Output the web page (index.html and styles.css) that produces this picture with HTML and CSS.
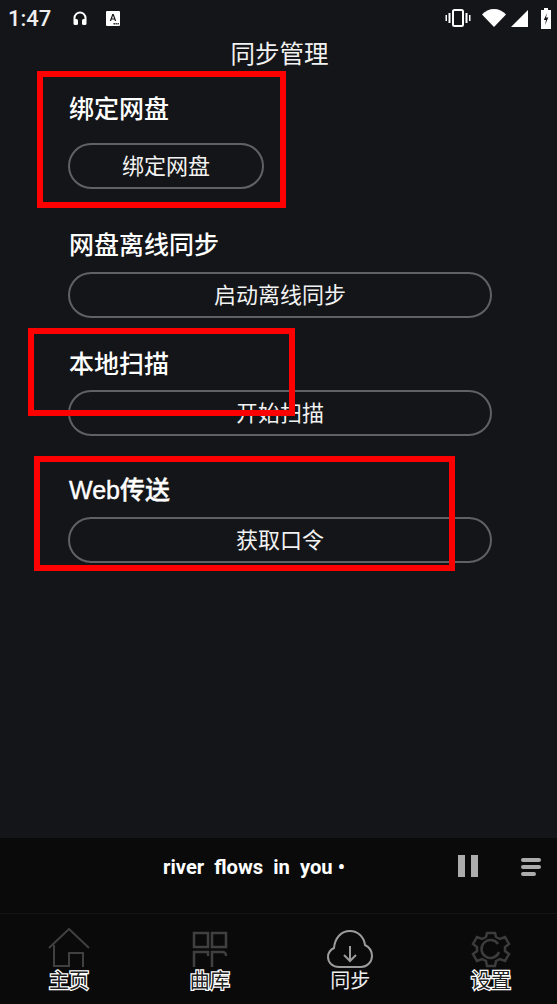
FILE: index.html
```html
<!DOCTYPE html>
<html>
<head>
    <title>同步管理</title>
    <link rel="stylesheet" href="styles.css">
</head>
<body>
    <div class="phone">
        <div class="status-bar">
            <span class="time">1:47</span>
            <svg class="status-icon headphones" viewBox="0 0 16 16">
                <path d="M2.500 10V8a5.500 5.500 0 0 1 11 0v2" fill="none" stroke="#fff" stroke-width="2"/>
                <rect x="1.500" y="9" width="4.500" height="6" rx="1.500" fill="#fff"/>
                <rect x="10" y="9" width="4.500" height="6" rx="1.500" fill="#fff"/>
            </svg>
            <svg class="status-icon sim" viewBox="0 0 14 15">
                <rect width="14" height="15" rx="1" fill="#fff"/>
                <path d="M3.800 10 6.300 3h1.400l2.500 7H8.900l-.5-1.500H5.600L5.100 10ZM6 7.400h2L7 4.500Z" fill="#141518"/>
                <rect x="7.500" y="12" width="1.300" height="1.500" fill="#141518"/>
                <rect x="9.500" y="12" width="1.300" height="1.500" fill="#141518"/>
                <rect x="11.500" y="12" width="1.300" height="1.500" fill="#141518"/>
            </svg>
            <span class="status-space"></span>
            <svg class="status-icon vibrate" viewBox="0 0 26 18">
                <rect x="8" y="1" width="10" height="16" rx="1.500" fill="none" stroke="#fff" stroke-width="2"/>
                <rect x="3.500" y="4" width="2" height="10" fill="#fff"/>
                <rect x="20.500" y="4" width="2" height="10" fill="#fff"/>
                <rect x="0.500" y="6" width="1.500" height="6" fill="#fff"/>
                <rect x="24" y="6" width="1.500" height="6" fill="#fff"/>
            </svg>
            <svg class="status-icon wifi" viewBox="0 0 24 18">
                <path d="M0 5.500C3 2 7.500 0 12 0s9 2 12 5.500L12 18Z" fill="#fff"/>
            </svg>
            <svg class="status-icon signal" viewBox="0 0 17 17">
                <path d="M17 0V17H0Z" fill="#fff"/>
            </svg>
            <svg class="status-icon battery" viewBox="0 0 10 21">
                <path d="M3 0h4v2h3v19H0V2h3Z" fill="#fff"/>
                <path d="M6 5 2.800 12H5l-1 5 3.300-7.500H5Z" fill="#141518"/>
            </svg>
        </div>

        <div class="page-title">同步管理</div>

        <div class="content">
            <section class="section section-bind">
                <h2>绑定网盘</h2>
                <button class="pill pill-short">绑定网盘</button>
            </section>
            <section class="section section-offline">
                <h2>网盘离线同步</h2>
                <button class="pill">启动离线同步</button>
            </section>
            <section class="section section-scan">
                <h2>本地扫描</h2>
                <button class="pill">开始扫描</button>
            </section>
            <section class="section section-web">
                <h2>Web传送</h2>
                <button class="pill">获取口令</button>
            </section>
        </div>

        <div class="mark mark-bind"></div>
        <div class="mark mark-scan"></div>
        <div class="mark mark-web"></div>

        <div class="player">
            <div class="track">river&nbsp; flows&nbsp; in&nbsp; you •</div>
            <div class="pause"><span></span><span></span></div>
            <div class="queue"><span></span><span></span><span class="queue-last"></span></div>
        </div>

        <nav class="tabs">
            <div class="tab">
                <svg class="tab-icon" viewBox="0 0 42 42" fill="none" stroke="#404040" stroke-width="2">
                    <path d="M1 20 21 1l20 19"/>
                    <path d="M6 17v21h15V25h14v14"/>
                </svg>
                <span class="tab-label">主页</span>
            </div>
            <div class="tab">
                <svg class="tab-icon" viewBox="0 0 42 42" fill="none" stroke="#404040" stroke-width="2.500">
                    <rect x="5" y="5" width="14" height="14"/>
                    <rect x="23" y="5" width="14" height="14"/>
                    <path d="M5 39V24h14v4"/>
                    <path d="M23 39V24h10c3 0 4 1 4 4"/>
                </svg>
                <span class="tab-label">曲库</span>
            </div>
            <div class="tab tab-active">
                <svg class="tab-icon cloud" viewBox="0 0 46 42" fill="none" stroke="#9c9c9c" stroke-width="2">
                    <path d="M12 39C6 39 1 35 1 29c0-4 2-7 6-9C8 10 14 3 23 3c8 0 14 6 15 14 4 2 7 6 7 11 0 6-5 11-11 11Z"/>
                    <path d="M23 18v15M17 27l6 6 6-6"/>
                </svg>
                <span class="tab-label">同步</span>
            </div>
            <div class="tab">
                <svg class="tab-icon" viewBox="0 0 42 42" fill="none" stroke="#3c3c3c" stroke-width="2.500">
                    <path d="M17 5h8l1 4 4 2 5-2 4 7-4 3v4l4 3-4 7-5-2-4 2-1 5h-8l-1-5-4-2-5 2-4-7 4-3v-4l-4-3 4-7 5 2 4-2Z"/>
                    <path d="M28 16a9 9 0 1 0 1 8"/>
                </svg>
                <span class="tab-label">设置</span>
            </div>
        </nav>
    </div>
</body>
</html>
```

FILE: styles.css
```css
body {
    margin: 0;
    padding: 0;
    background-color: #141518;
    color: #fff;
    font-family: "Liberation Sans", "Noto Sans CJK SC", sans-serif;
}

.phone {
    position: relative;
    width: 557px;
    height: 1004px;
    overflow: hidden;
    display: flex;
    flex-direction: column;
}

.status-bar {
    height: 36px;
    display: flex;
    align-items: center;
    padding: 0 6px 0 8px;
    flex-shrink: 0;
}

.time {
    font-family: "Roboto", sans-serif;
    font-size: 22px;
    font-weight: 500;
    color: #eee;
    margin-right: 21px;
}

.status-icon {
    display: block;
}

.headphones {
    width: 16px;
    height: 16px;
    margin-right: 18px;
}

.sim {
    width: 14px;
    height: 15px;
}

.status-space {
    flex: 1;
}

.vibrate {
    width: 26px;
    height: 18px;
    margin-right: 11px;
}

.wifi {
    width: 24px;
    height: 18px;
    margin-right: 5px;
}

.signal {
    width: 17px;
    height: 17px;
    margin-right: 13px;
}

.battery {
    width: 10px;
    height: 21px;
}

.page-title {
    height: 36px;
    margin-top: 1px;
    line-height: 36px;
    text-align: center;
    font-size: 24.500px;
    color: #f2f2f2;
    padding-left: 2px;
}

.content {
    flex: 1;
    padding: 0 65px 0 68px;
}

.section h2 {
    margin: 0;
    height: 36px;
    line-height: 36px;
    font-size: 25px;
    font-weight: 500;
    padding-left: 1px;
}

.section-bind {
    margin-top: 18px;
}

.section-bind h2 {
    margin-bottom: 16px;
}

.section-offline {
    margin-top: 38px;
}

.section-offline h2,
.section-web h2 {
    margin-bottom: 9px;
}

.section-scan {
    margin-top: 28px;
}

.section-scan h2 {
    margin-bottom: 8px;
}

.section-web {
    margin-top: 36px;
}

.section-web h2 {
    -webkit-text-stroke: 0.400px #fff;
}

.pill {
    display: block;
    width: 100%;
    height: 46px;
    padding: 0 0 4px;
    box-sizing: border-box;
    background: none;
    border: 2px solid #616165;
    border-radius: 23px;
    color: #f2f2f2;
    font-family: inherit;
    font-size: 22px;
    text-align: center;
}

.pill-short {
    width: 196px;
}

.mark {
    position: absolute;
    box-sizing: border-box;
    border: 6px solid #f00;
}

.mark-bind {
    left: 37px;
    top: 71px;
    width: 249px;
    height: 137px;
}

.mark-scan {
    left: 28px;
    top: 328px;
    width: 267px;
    height: 88px;
}

.mark-web {
    left: 34px;
    top: 456px;
    width: 421px;
    height: 115px;
}

.player {
    height: 77px;
    flex-shrink: 0;
    display: flex;
    padding-top: 17px;
    box-sizing: border-box;
    background-color: #0a0a0b;
    border-top: 1px solid #15161a;
    border-bottom: 1px solid #151515;
}

.track {
    width: 458px;
    height: 28px;
    margin-top: -2px;
    line-height: 28px;
    text-align: center;
    font-family: "Roboto", sans-serif;
    font-size: 20.200px;
    font-weight: 700;
    padding-left: 50px;
    box-sizing: border-box;
}

.pause {
    width: 63px;
    height: 22px;
    display: flex;
    gap: 6px;
}

.pause span {
    width: 7px;
    height: 22px;
    background-color: #acacac;
}

.queue {
    display: flex;
    flex-direction: column;
    gap: 3px;
    width: 20px;
    padding-top: 3px;
}

.queue span {
    height: 4px;
    border-radius: 2px;
    background-color: #acacac;
}

.queue .queue-last {
    width: 15px;
}

.tabs {
    height: 90px;
    flex-shrink: 0;
    display: flex;
    justify-content: space-between;
    padding: 14px 46px 0 49px;
    box-sizing: border-box;
    background-color: #0a0a0b;
}

.tab {
    width: 40px;
    display: flex;
    flex-direction: column;
    align-items: center;
}

.tab-icon {
    width: 42px;
    height: 42px;
    flex-shrink: 0;
}

.cloud {
    width: 46px;
}

.tab-label {
    font-size: 20px;
    line-height: 28px;
    margin-top: -3px;
    white-space: nowrap;
    color: #222;
    font-weight: 400;
    -webkit-text-stroke: 2.500px #fff;
    paint-order: stroke fill;
}

.tab-active .tab-label {
    color: #eee;
    -webkit-text-stroke: 0;
}
```
